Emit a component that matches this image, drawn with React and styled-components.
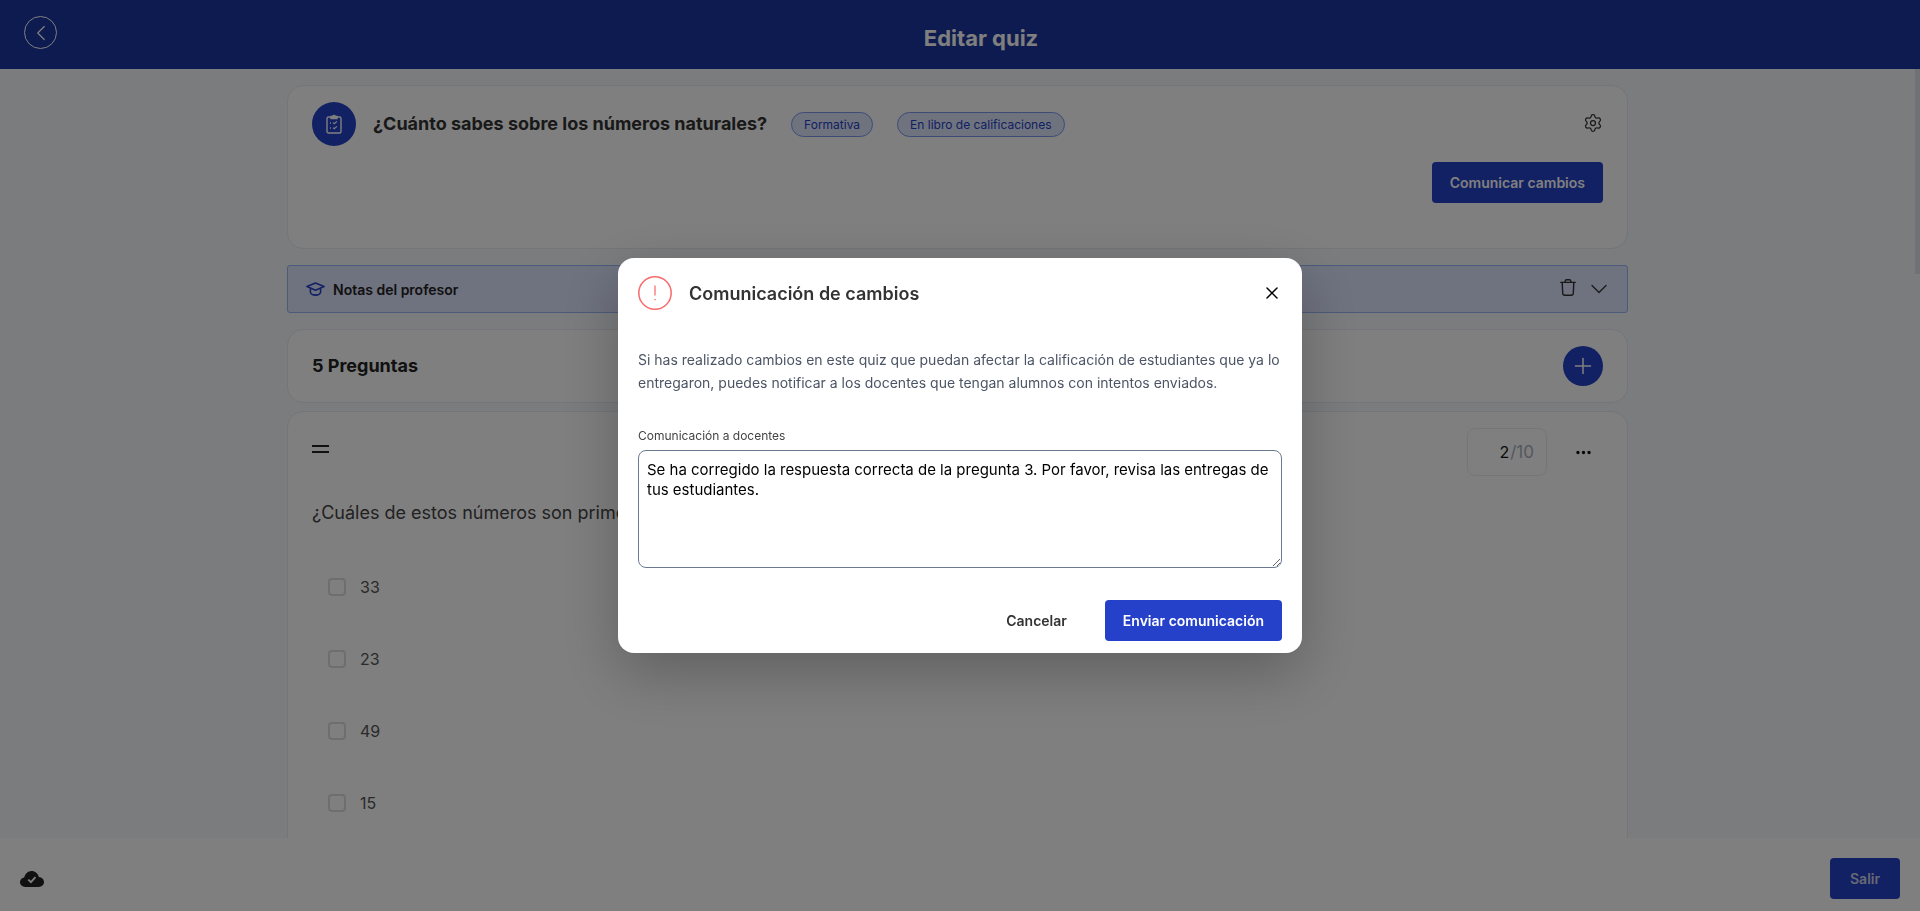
import React from 'react';
import styled, { createGlobalStyle } from 'styled-components';
import { ChevronDown, ChevronLeft, Ellipsis, Plus, Settings, X } from 'lucide-react';

const COLORS = {
  primary: '#2541c9',
  header: '#1c36a2',
  page: '#f6f8fc',
  border: '#e6eaf0',
  text: '#333',
};

const GlobalStyle = createGlobalStyle`
  html, body {
    margin: 0;
    height: 100%;
    overflow: hidden;
    background: ${COLORS.page};
    font-family: Inter, "Liberation Sans", sans-serif;
  }
  * { box-sizing: border-box; }
`;

const ClipboardIcon = () => (
  <svg width="16" height="20" viewBox="0 0 16 20" fill="none" stroke="white" strokeWidth="1.4">
    <rect x="1" y="3" width="14" height="16" rx="1.5" />
    <path d="M5 3.5V2.4h1.6a1.5 1.5 0 0 1 2.8 0H11v2.2H5z" fill="white" />
    <path d="M7 8.6l1.3 1.2 2.6-2.4M7 13.6l1.3 1.2 2.6-2.4" strokeWidth="1.2" />
    <path d="M4 9h1M4 14h1" strokeWidth="1.5" />
  </svg>
);

const CapIcon = () => (
  <svg width="19" height="14" viewBox="0 0 19 14" fill="none" stroke={COLORS.primary} strokeWidth="1.6" strokeLinejoin="round">
    <path d="M1 4.6 9.5 1 18 4.6 9.5 8.2z" />
    <path d="M4.4 6.4v3.7c0 1.6 2.4 3 5.1 3s5.1-1.4 5.1-3V6.4" />
  </svg>
);

const BinIcon = () => (
  <svg width="16" height="17" viewBox="0 0 16 17" fill="none" stroke="#333" strokeWidth="1.4" strokeLinecap="round">
    <path d="M.8 3.400h14.400" />
    <path d="M5.200 3.400V2.200C5.200 1.300 5.900.8 6.700.8h2.600c.8 0 1.500.5 1.500 1.400v1.200" />
    <path d="M2.200 3.400l.5 10.800c.1 1.200.9 2 2 2h6.600c1.100 0 1.900-.8 2-2l.5-10.800" />
  </svg>
);

const CloudIcon = () => (
  <svg width="24" height="16" viewBox="0 0 24 16">
    <path
      d="M5.400 16C2.200 16 0 13.900 0 11.100 0 8.700 1.800 6.800 4.200 6.500 5 2.900 8 0 11.600 0c3.500 0 6.400 2.500 7.200 6 2.900.2 5.200 2.300 5.200 5.100 0 2.800-2.300 4.900-5.300 4.900z"
      fill="#222"
    />
    <path d="m8.300 8.600 2.600 2.600 4.600-5" fill="none" stroke="white" strokeWidth="1.800" />
  </svg>
);

const AlertIcon = () => (
  <svg width="34" height="34" viewBox="0 0 34 34" fill="none" stroke="#f96a6a" strokeWidth="1.500">
    <circle cx="17" cy="17" r="16.200" />
    <path d="M17 9.500v10M17 23v1.200" strokeWidth="1.250" />
  </svg>
);

const options = ['33', '23', '49', '15'];

const App = () => {
  return (
    <>
      <GlobalStyle />
      <Page>
        <Header>
          <BackButton>
            <ChevronLeft size={26} strokeWidth={1.1} />
          </BackButton>
          <HeaderTitle>Editar quiz</HeaderTitle>
        </Header>
        <Body>
          <Scroller>
            <Content>
              <QuizCard>
                <QuizRow>
                  <QuizIcon>
                    <ClipboardIcon />
                  </QuizIcon>
                  <QuizTitle>¿Cuánto sabes sobre los números naturales?</QuizTitle>
                  <Chip>Formativa</Chip>
                  <Chip>En libro de calificaciones</Chip>
                  <GearButton>
                    <Settings size={20} strokeWidth={1.5} />
                  </GearButton>
                </QuizRow>
                <QuizActions>
                  <PrimaryButton>Comunicar cambios</PrimaryButton>
                </QuizActions>
              </QuizCard>

              <NotesBar>
                <CapIcon />
                <NotesTitle>Notas del profesor</NotesTitle>
                <NotesActions>
                  <BinButton>
                    <BinIcon />
                  </BinButton>
                  <ChevronDown size={28} strokeWidth={1.1} />
                </NotesActions>
              </NotesBar>

              <CountCard>
                <CountTitle>5 Preguntas</CountTitle>
                <AddButton>
                  <Plus size={26} strokeWidth={1.4} />
                </AddButton>
              </CountCard>

              <QuestionCard>
                <QuestionTop>
                  <DragHandle />
                  <Score>
                    <ScoreValue>2</ScoreValue>
                    <ScoreTotal>/10</ScoreTotal>
                  </Score>
                  <MoreButton>
                    <Ellipsis size={19} strokeWidth={2.25} />
                  </MoreButton>
                </QuestionTop>
                <QuestionText>¿Cuáles de estos números son primos?</QuestionText>
                <OptionList>
                  {options.map((option) => (
                    <Option key={option}>
                      <Checkbox />
                      {option}
                    </Option>
                  ))}
                </OptionList>
              </QuestionCard>
            </Content>
          </Scroller>
          <ScrollTrack>
            <ScrollThumb />
          </ScrollTrack>
        </Body>
        <Footer>
          <CloudSlot>
            <CloudIcon />
          </CloudSlot>
          <ExitButton>Salir</ExitButton>
        </Footer>
      </Page>

      <Overlay>
        <Modal>
          <ModalHeader>
            <AlertIcon />
            <ModalTitle>Comunicación de cambios</ModalTitle>
            <CloseButton>
              <X size={20} strokeWidth={1.75} />
            </CloseButton>
          </ModalHeader>
          <ModalText>
            Si has realizado cambios en este quiz que puedan afectar la calificación de estudiantes
            que ya lo entregaron, puedes notificar a los docentes que tengan alumnos con intentos
            enviados.
          </ModalText>
          <FieldLabel htmlFor="message">Comunicación a docentes</FieldLabel>
          <MessageInput
            id="message"
            defaultValue="Se ha corregido la respuesta correcta de la pregunta 3. Por favor, revisa las entregas de tus estudiantes."
          />
          <ModalActions>
            <CancelButton>Cancelar</CancelButton>
            <SendButton>Enviar comunicación</SendButton>
          </ModalActions>
        </Modal>
      </Overlay>
    </>
  );
};

const Page = styled.div`
  height: 100vh;
  display: flex;
  flex-direction: column;
`;

const Header = styled.header`
  flex: 0 0 69px;
  display: flex;
  align-items: center;
  padding: 0 15px 0 24px;
  background: ${COLORS.header};
  color: white;
`;

const BackButton = styled.button`
  width: 33px;
  height: 33px;
  margin-bottom: 4px;
  padding: 0;
  display: flex;
  align-items: center;
  justify-content: center;
  border: 1px solid white;
  border-radius: 50%;
  background: none;
  color: white;
`;

const HeaderTitle = styled.h1`
  flex: 1;
  margin: 7px 0 0;
  text-align: center;
  font-size: 22px;
  line-height: 28px;
  font-weight: 700;
`;

const Body = styled.div`
  flex: 1;
  min-height: 0;
  display: flex;
`;

const Scroller = styled.main`
  flex: 1;
  min-width: 0;
  overflow: hidden;
  padding-top: 16px;
`;

const ScrollTrack = styled.div`
  flex: 0 0 5px;
`;

const ScrollThumb = styled.div`
  height: 205px;
  background: #dfe3e8;
`;

const Content = styled.div`
  width: 1341px;
  margin: 0 auto;
`;

const Card = styled.section`
  background: white;
  border: 1px solid ${COLORS.border};
  border-radius: 16px;
`;

const QuizCard = styled(Card)`
  height: 164px;
  padding: 16px 24px;
`;

const QuizRow = styled.div`
  display: flex;
  align-items: center;
`;

const QuizIcon = styled.div`
  flex: 0 0 44px;
  height: 44px;
  display: flex;
  align-items: center;
  justify-content: center;
  border-radius: 50%;
  background: ${COLORS.primary};
`;

const QuizTitle = styled.h2`
  margin: 0 24px 0 17px;
  font-size: 18px;
  line-height: 24px;
  font-weight: 700;
  color: ${COLORS.text};
`;

const Chip = styled.span`
  height: 25px;
  margin: 1px 24px 0 0;
  padding: 0 12px;
  display: flex;
  align-items: center;
  border: 1px solid #7f97ee;
  border-radius: 13px;
  background: #dfe6fb;
  font-size: 12px;
  color: ${COLORS.primary};
`;

const GearButton = styled.div`
  margin: -2px 0 0 auto;
  display: flex;
  color: #333;
`;

const QuizActions = styled.div`
  margin-top: 16px;
  display: flex;
  justify-content: flex-end;
`;

const PrimaryButton = styled.button`
  height: 41px;
  padding: 0 18px;
  border: 0;
  border-radius: 4px;
  background: ${COLORS.primary};
  font: 600 14px Inter, sans-serif;
  color: white;
`;

const NotesBar = styled.div`
  height: 48px;
  margin-top: 16px;
  padding: 0 14px 0 18px;
  display: flex;
  align-items: center;
  border: 1px solid #9bb4f2;
  border-radius: 3px;
  background: #dee4fe;
`;

const NotesTitle = styled.span`
  margin-left: 8px;
  font-size: 14px;
  font-weight: 600;
  color: #222;
`;

const NotesActions = styled.div`
  margin-left: auto;
  display: flex;
  align-items: center;
  gap: 9px;
  color: #333;
`;

const BinButton = styled.div`
  margin-bottom: 3px;
  display: flex;
`;

const CountCard = styled(Card)`
  height: 74px;
  margin-top: 16px;
  padding: 0 24px;
  display: flex;
  align-items: center;
  justify-content: space-between;
`;

const CountTitle = styled.h3`
  margin: 0 0 1px;
  font-size: 18px;
  font-weight: 700;
  color: #222;
`;

const AddButton = styled.button`
  width: 40px;
  height: 40px;
  padding: 0;
  display: flex;
  align-items: center;
  justify-content: center;
  border: 0;
  border-radius: 50%;
  background: ${COLORS.primary};
  color: white;
`;

const QuestionCard = styled(Card)`
  margin-top: 8px;
  padding: 16px 24px 60px;
`;

const QuestionTop = styled.div`
  display: flex;
  align-items: center;
`;

const DragHandle = styled.div`
  width: 17px;
  height: 8px;
  margin-top: -7px;
  border-top: 2.5px solid #222;
  border-bottom: 2.5px solid #222;
`;

const Score = styled.div`
  width: 80px;
  height: 48px;
  margin-left: auto;
  padding-right: 12px;
  display: flex;
  align-items: center;
  justify-content: flex-end;
  gap: 1px;
  border: 1px solid ${COLORS.border};
  border-radius: 8px;
  font-size: 16px;
`;

const ScoreValue = styled.span`
  color: #111;
`;

const ScoreTotal = styled.span`
  font-size: 17px;
  color: #a9afbb;
`;

const MoreButton = styled.div`
  margin: 0 10px 0 27px;
  display: flex;
  color: #111;
`;

const QuestionText = styled.p`
  margin: 25px 0 0;
  font-size: 18px;
  line-height: 24px;
  color: #444;
`;

const OptionList = styled.div`
  margin-top: 53px;
  padding-left: 16px;
  display: flex;
  flex-direction: column;
  gap: 54px;
`;

const Option = styled.label`
  height: 18px;
  display: flex;
  align-items: center;
  gap: 14px;
  font-size: 16px;
  color: #555;
`;

const Checkbox = styled.span`
  width: 18px;
  height: 18px;
  border: 2px solid #dcdcdc;
  border-radius: 4px;
`;

const Footer = styled.footer`
  position: relative;
  flex: 0 0 73px;
  padding: 0 20px;
  display: flex;
  align-items: center;
  justify-content: space-between;
  background: white;
`;

const CloudSlot = styled.div`
  margin-top: 9px;
  display: flex;
`;

const ExitButton = styled(PrimaryButton)`
  width: 70px;
  margin-top: 7px;
  padding: 0;
  color: #cfd3e6;
`;

const Overlay = styled.div`
  position: fixed;
  inset: 0;
  display: flex;
  align-items: center;
  justify-content: center;
  background: rgba(0, 0, 0, 0.5);
`;

const Modal = styled.div`
  width: 684px;
  height: 395px;
  padding: 18px 20px 12px;
  display: flex;
  flex-direction: column;
  border-radius: 16px;
  background: white;
  box-shadow: 0 20px 60px rgba(0, 0, 0, 0.25);
`;

const ModalHeader = styled.div`
  display: flex;
  align-items: center;
`;

const ModalTitle = styled.h2`
  flex: 1;
  margin: 0 0 0 17px;
  font-size: 18px;
  font-weight: 600;
  color: ${COLORS.text};
`;

const CloseButton = styled.button`
  padding: 0;
  display: flex;
  border: 0;
  background: none;
  color: black;
`;

const ModalText = styled.p`
  margin: 38px 0 0;
  font-size: 14px;
  line-height: 23px;
  color: #4b5565;
`;

const FieldLabel = styled.label`
  margin-top: 34px;
  font-size: 12px;
  line-height: 16px;
  color: #444;
`;

const MessageInput = styled.textarea`
  height: 118px;
  margin-top: 6px;
  padding: 9px 8px;
  appearance: none;
  border: 1px solid #6b7a92;
  border-radius: 8px;
  font: 400 15px/19.5px Inter, sans-serif;
  letter-spacing: -0.01px;
  color: black;
  outline: none;
`;

const ModalActions = styled.div`
  margin-top: auto;
  display: flex;
  justify-content: flex-end;
  align-items: center;
  gap: 20px;
`;

const CancelButton = styled.button`
  height: 41px;
  padding: 0 18px;
  border: 0;
  background: none;
  font: 600 14px Inter, sans-serif;
  color: #333;
`;

const SendButton = styled(PrimaryButton)``;

export default App;
